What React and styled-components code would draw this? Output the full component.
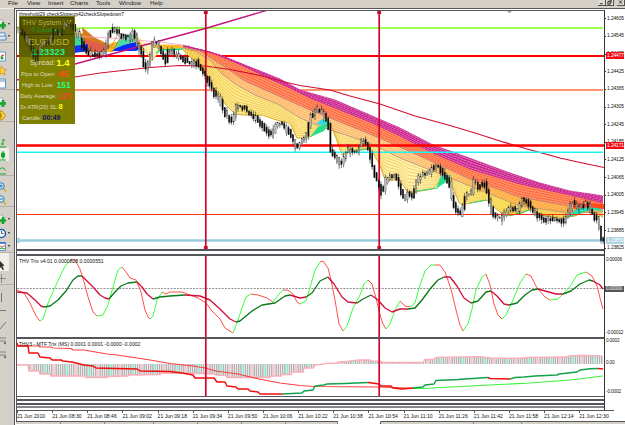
import React from "react";
import styled, { createGlobalStyle } from "styled-components";

const GlobalStyle = createGlobalStyle`
  * { box-sizing: border-box; }
  body {
    margin: 0;
    overflow: hidden;
    font-family: "Liberation Sans", Arial, sans-serif;
  }
`;

const INK = "#56565a";
const FACE = "#d4d0c8";

const menus = [
  ["File", 19],
  ["View", 21],
  ["Insert", 22],
  ["Charts", 26],
  ["Tools", 23],
  ["Window", 31],
  ["Help", 20],
];

const tools = [
  { icon: "add", h: 18, drop: true },
  { icon: "window", h: 13, drop: true, after: true },
  { icon: "compass", h: 19 },
  { icon: "star", h: 14 },
  { icon: "page", h: 14, after: true },
  { icon: "add", h: 18 },
  { icon: "coin", h: 14, after: true },
  { icon: "bars", h: 26 },
  { icon: "candle", h: 13, on: true },
  { icon: "line", h: 15, after: true },
  { icon: "zoomin", h: 17 },
  { icon: "zoomout", h: 14, after: true },
  { icon: "add", h: 18, drop: true },
  { icon: "clock", h: 14, drop: true },
  { icon: "grid", h: 14, drop: true, after: true },
  { icon: "cursor", h: 18, on: true },
  { icon: "cross", h: 14, after: true },
  { icon: "vline", h: 18 },
  { icon: "hline", h: 13 },
  { icon: "trend", h: 15 },
  { icon: "fibo", h: 15 },
  { icon: "fibo", h: 14 },
];

const prices = ["1.24605", "1.24545", "1.24485", "1.24425", "1.24365", "1.24305", "1.24245", "1.24185", "1.24125", "1.24065", "1.24005", "1.23945", "1.23885", "1.23825"];

const times = ["2010", "08:30", "08:46", "09:02", "09:18", "09:34", "09:50", "10:06", "10:22", "10:38", "10:54", "11:10", "11:26", "11:42", "11:58", "12:14", "12:30"];

const pts = (s) => s.trim().split(/\s+/).map((p) => p.split(",").map(Number));

const at = (curve, x) => {
  if (x <= curve[0][0]) return curve[0][1];
  for (let i = 1; i < curve.length; i++) {
    const [x1, y1] = curve[i];
    const [x0, y0] = curve[i - 1];
    if (x <= x1) return y0 + ((y1 - y0) * (x - x0)) / (x1 - x0);
  }
  return curve[curve.length - 1][1];
};

const price = pts(`17,32 21,30 25,35 30,42 36,62 40,48 45,42 50,43 55,28 60,35 66,24 72,24 75,28 80,38 85,49 90,54 100,55 105,52
  110,35 113,30 118,32 124,37 130,38 134,31 138,44 142,52 146,70 150,60 154,42 158,42 162,52 167,62 169,50 175,54 185,59 190,64
  196,61 202,70 207,78 210,84 215,94 220,97 222,105 226,114 233,122 237,107 243,107 250,113 255,117 262,124 268,132 272,135
  277,124 282,123 287,128 292,137 297,147 303,140 308,133 311,117 315,114 319,108 325,116 329,124 331,150 337,158 342,164
  348,150 353,152 358,152 363,140 368,146 372,160 376,177 380,185 383,195 387,178 391,177 396,176 400,185 404,200 408,192
  413,197 418,180 424,174 432,171 438,165 443,172 450,183 453,200 457,210 462,215 466,195 472,195 475,180 479,187 485,182
  489,195 493,215 500,220 506,213 512,208 518,212 523,200 528,202 534,212 540,217 546,220 552,218 558,220 564,222 570,210
  573,202 580,208 586,203 592,212 598,220 602,238 604,240`);

// ribbon boundaries, slowest average first
const slow = pts("183,46 190,47 205,51 220,55 240,63 260,71 280,79 300,90 335,100 370,115 400,128 433,145 450,151 480,162 510,173 540,183 570,191 604,196");
const magenta = pts("183,46 210,52 225,58 250,69 270,79 290,88 310,98 340,110 370,122 400,136 433,153 470,169 520,184 570,195 604,203");
const tomato = pts("183,47 200,51 225,67 245,81 270,92 290,101 310,110 335,120 370,134 400,147 433,162 470,179 520,197 570,206 604,209");
const orange = pts("183,48 195,51 210,60 222,74 235,84 255,95 280,105 300,118 325,128 370,143 400,158 433,171 455,180 480,190 520,206 570,213 604,212");
const fast = pts(`183,50 195,62 205,74 215,90 225,104 235,114 245,115 262,115 280,121 290,123 297,138 310,137 320,131 330,122 335,135 342,155
  355,150 370,148 380,165 385,180 400,180 408,193 420,191 433,189 445,175 452,186 460,205 470,203 488,200 495,208 505,216 520,214
  530,209 540,215 560,218 575,216 590,209 604,218`);

const between = (a, b, t) => {
  const out = [];
  for (let x = 183; x <= 604; x += 3) out.push([x, at(a, x) * (1 - t) + at(b, x) * t]);
  return out;
};

const toPoints = (list) => list.map(([x, y]) => `${x},${y.toFixed(1)}`).join(" ");

function Band({ a, b, fill, stroke, lines, light }) {
  const strands = [];
  for (let i = 0; i <= lines; i++) strands.push(between(a, b, i / lines));
  return (
    <g fill="none">
      <polygon fill={fill} points={toPoints([...between(a, b, 0), ...between(a, b, 1).reverse()])} />
      {strands.map((s, i) => (
        <polyline key={i} points={toPoints(s)} stroke={i % 2 ? light : stroke} strokeWidth={i % 2 ? 0.5 : 0.6} strokeDasharray={i % 2 ? "2 1.2" : "none"} />
      ))}
    </g>
  );
}

const candles = [];
let seed = 7;
const rnd = () => {
  seed = (seed * 16807) % 2147483647;
  return seed / 2147483647;
};
for (let x = 18; x < 604; x += 2.2) {
  const y0 = at(price, x - 1.3);
  const y1 = at(price, x + 1.3);
  const shift = (rnd() - 0.5) * 3;
  const pad = 0.4 + rnd() * 1.8;
  const top = Math.min(y0, y1) - pad + shift;
  const bottom = Math.max(y0, y1) + pad + shift;
  candles.push({ x, top, bottom, hi: top - rnd() * 4, lo: bottom + rnd() * 4, up: y1 < y0 ? rnd() > 0.2 : rnd() > 0.8 });
}

function Candles({ list }) {
  return list.map((c) => (
    <g key={c.x}>
      <path d={`M${c.x} ${c.hi}V${c.lo}`} stroke="#222" strokeWidth="0.6" />
      <rect x={c.x - 0.7} y={c.top} width="1.4" height={c.bottom - c.top} fill={c.up ? "#bbb" : "#050505"} stroke="#222" strokeWidth="0.25" />
    </g>
  ));
}

// r/g segments, each one starts where the last one ended
const trixFast = [
  ["r", "17,290 24,293 30,303 36,316 40,321"], ["g", "43,319 48,303 56,285 65,266 71,260"],
  ["r", "75,260 80,269 84,282 88,297 93,312 97,316"], ["g", "103,315 108,305 113,287 118,270 122,267"],
  ["r", "126,272 130,278 136,280 141,292 145,310 148,317 150,319"], ["g", "153,316 157,300 162,292"],
  ["r", "166,294 170,292 182,292 190,295 198,298 206,303 212,311 220,319 225,328 233,333"], ["g", "238,320 242,308 246,297 251,294"],
  ["r", "258,295 267,298 273,302"], ["g", "279,294 283,290"],
  ["r", "288,290 293,294 297,302 300,304"], ["g", "306,301 311,284 315,270 320,262"],
  ["r", "323,261 328,268 331,280 335,300 339,324 343,331"], ["g", "347,326 353,308 360,295 364,284 368,280"],
  ["r", "372,284 376,298 380,315 383,324 386,329"], ["g", "390,324 395,310 400,301"],
  ["r", "405,306 410,307"], ["g", "415,303 420,285 425,271 431,265 435,265"],
  ["r", "440,265 445,272 451,289 456,310 460,325 463,331"], ["g", "468,324 472,309 476,290 482,277 486,274"],
  ["r", "490,285 494,304 498,315 502,319"], ["g", "506,315 513,300 520,283 526,274"],
  ["r", "531,276 537,288 545,297 550,300"], ["g", "558,299 566,291 571,285 577,275 586,272"],
  ["r", "592,276 597,286 600,298 603,309"],
];

const trixSlow = [
  ["r", "17,292 27,293 35,300 41,306 44,307"], ["g", "50,306 58,300 66,291 73,280 78,276 82,276"],
  ["r", "88,282 94,288 100,295 105,298 109,299"], ["g", "115,292 121,286 128,283 137,282"],
  ["r", "142,287 147,294 153,299"], ["g", "160,297 170,296 185,295"],
  ["r", "200,296 210,300 220,309 230,319 236,322"], ["g", "240,321 252,311 262,305 275,303 285,296 290,295"],
  ["r", "300,298 306,297"], ["g", "312,293 320,281 328,277"],
  ["r", "334,284 342,297 348,302 357,303"], ["g", "363,299 371,295"],
  ["r", "378,300 385,308 392,312 400,309 408,309"], ["g", "415,308 422,300 430,289 438,280 444,277"],
  ["r", "450,277 457,286 464,298 471,303"], ["g", "478,301 486,292 491,291"],
  ["r", "497,296 504,304 509,305"], ["g", "517,303 525,295 532,290 538,289"],
  ["r", "545,291 556,294 563,294"], ["g", "571,291 580,284 589,280 593,281"],
  ["r", "600,285 603,289"],
];

const mtfMain = [
  ["r", `17,343 18,346 28,346 29,353 38,353 40,357 50,358 52,360 61,360 63,361 72,362 84,365 93,366 96,368 137,369 140,371 170,371.5
    182,373 193,375 195,378 214,378 217,382 225,382 227,386 236,387 238,389 248,389 250,391 258,392 260,394 282,394`],
  ["g", "302,393 304,391 313,390 315,386 324,385 327,384 345,383.5 368,382.5"],
  ["r", "379,384 381,386 391,386 393,388 402,389 413,388"],
  ["g", "423,387 425,385 434,384 436,380.5 458,379.5 480,378 488,377.5"],
  ["r", "490,378.5 510,379"],
  ["g", "515,377.5 524,377 535,376 557,375 559,374 568,373 577,372 580,370 590,368.8 598,368.5"],
  ["r", "603,369"],
];

const mtfSlow = [
  ["r", "17,346 39,346 40,347 51,347 53,348 71,348.5 73,350 84,350 107,354 117,355 137,358 150,360 170,363.5 193,366 205,368 216,371 238,374 259,379 280,383 300,385.5 314,386.5 380,387 413,388.3"],
  ["g", "424,388.5 450,387 490,385 530,383 570,380 603,376"],
];

const hist = pts(`17,365 28,365 29,371 39,371 40,374 50,374 51,376 84,376 85,377.5 107,377.5 108,376.5 128,376 129,375 160,374.5
  161,373 204,373.5 215,374 216,375 226,375.5 227,377.5 270,377.5 271,376 281,376 282,374.5 291,374.5 292,372 303,372 304,368
  313,368 315,365 324,364 326,363.3 337,363 338,362 349,361.5 350,360.8 359,360 370,360 371,361 381,361.5 382,362.5 415,362.5
  423,362.5 425,359.5 434,359.5 436,357.3 480,356.6 490,358 510,358.3 525,358 526,357.3 567,357 569,355.8 580,355.5 598,355.7 603,356.7`);

function Trace({ parts, r, g, width }) {
  let last = "";
  return parts.map(([side, p], i) => {
    const points = `${last} ${p}`;
    last = p.trim().split(/\s+/).pop();
    return <polyline key={i} points={points} fill="none" stroke={side === "r" ? r : g} strokeWidth={width} strokeLinejoin="round" />;
  });
}

function Markers({ top, bottom }) {
  return [205.8, 379.2].map((x) => <path key={x} d={`M${x} ${top}V${bottom}`} stroke="#d2042d" strokeWidth="1.7" />);
}

function PriceChart() {
  return (
    <Plot viewBox="17 11 587 238" height="238">
      <defs>
        <linearGradient id="yellow" gradientUnits="userSpaceOnUse" x1="183" x2="604" y1="0" y2="0">
          <stop offset="0" stopColor="#f7bb1a" />
          <stop offset="0.08" stopColor="#fbe27a" />
          <stop offset="0.6" stopColor="#fff0ae" />
          <stop offset="0.8" stopColor="#ffdf2e" />
          <stop offset="1" stopColor="#ffcf30" />
        </linearGradient>
        <linearGradient id="amber" gradientUnits="userSpaceOnUse" x1="183" x2="604" y1="0" y2="0">
          <stop offset="0" stopColor="#f58a10" />
          <stop offset="0.13" stopColor="#ffc17a" />
          <stop offset="0.55" stopColor="#ffd08a" />
          <stop offset="0.75" stopColor="#ffad2a" />
          <stop offset="1" stopColor="#ff9a20" />
        </linearGradient>
      </defs>

      <path d="M17 28H603" stroke="#9cff4f" strokeWidth="1.8" />
      <path d="M17 56H604" stroke="#ff0000" strokeWidth="2" />
      <path d="M17 90H603" stroke="#ff6f3c" strokeWidth="1.6" />

      <path d="M75 33L83 33 92 42 105 45 116 42 137 40 137 47 120 46 112 52 75 52Z" fill="#ffb01e" />
      <path d="M82 27L94 37 108 44 104 51 90 50 84 42Z" fill="#df7a1e" />
      <path d="M84 39L110 46 106 52 90 52Z" fill="#df6248" />
      <path d="M74 34L82 36 85 46 74 47Z" fill="#35dda0" />
      <path d="M74 46L88 44 88 51 74 53Z" fill="#1030ff" />
      <path d="M112 51L120 45 137 42 146 46 136 51Z" fill="#0a2bff" />
      <path d="M114 49L120 38 134 34 138 41 124 45Z" fill="#4fdca4" />
      <path d="M134 34L146 44 180 45 190 48 150 51 140 50Z" fill="#f8b92c" />
      <path d="M137 38L152 61 160 50" fill="#fff2b8" stroke="#e0a42c" strokeWidth="0.7" />
      <path d="M82 30Q94 41 111 47L118 34M112 52L122 35" fill="none" stroke="#b98214" strokeWidth="0.7" />
      <path d="M156 53L161 50 184 49" fill="none" stroke="#17e07c" strokeWidth="1.4" />
      <path d="M75 36L110 38 160 42 190 46" fill="none" stroke="#f59ac8" strokeWidth="0.8" />

      <Band a={orange} b={fast} fill="url(#yellow)" stroke="#ecc030" light="#fffbe2" lines={18} />
      <Band a={tomato} b={orange} fill="url(#amber)" stroke="#ffa850" light="#ffe8c8" lines={10} />
      <Band a={magenta} b={tomato} fill="#ff8058" stroke="#ff5a28" light="#ffc4a8" lines={10} />
      <Band a={slow} b={magenta} fill="#d0449e" stroke="#c4007c" light="#f2b0da" lines={8} />
      <g fill="none" strokeWidth="0.7">
        <polyline points={toPoints(between(orange, fast, 0))} stroke="#a8957c" />
        <polyline points={toPoints(between(tomato, orange, 0))} stroke="#b58a80" />
        <polyline points={toPoints(between(fast, fast, 0))} stroke="#cf9c16" />
      </g>

      {/* short-lived up slopes */}
      <path d="M310 137L318 127 331 121 324 131Z" fill="#24e08c" />
      <path d="M316 124L322 119 330 122 322 125Z" fill="#2fdde0" />
      <path d="M436 189L440 178 451 175 446 182Z" fill="#24e08c" />
      <path d="M439 179L444 174 450 176Z" fill="#2fdde0" />
      <path d="M567 218L576 209 592 205 604 211 590 210Z" fill="#24dfb4" />
      <path d="M572 204L586 203 604 204 604 209 588 207 574 209Z" fill="#ff4a1e" />
      <path d="M417 191L437 188M470 203L486 200M509 216L530 210M355 151L368 149" stroke="#35d07a" strokeWidth="1" />

      <path d="M17 80L75 64 130 49 207 28 268 10" fill="none" stroke="#c4127c" strokeWidth="1.3" />
      <path
        d="M17 90L75 77 100 73 150 67.500 180 65.500 205 66 230 69.500 260 75.500 285 82 300 85.500 330 90 350 96 380 104 415 116 430 120 450 125.500 475 133 500 141 520 147 540 152.500 560 158 580 162.500 604 167.500"
        fill="none"
        stroke="#d20f30"
        strokeWidth="1.2"
      />

      <path d="M17 145.5H604" stroke="#ff0000" strokeWidth="2.7" />
      <path d="M17 152.3H603" stroke="#1cf4f4" strokeWidth="1.6" />
      <path d="M17 214.5H604" stroke="#ff3010" strokeWidth="1.1" />
      <path d="M17 240.5H604" stroke="#b5dcea" strokeWidth="3" />
      <path d="M17 240.5H604" stroke="#98c9dc" strokeWidth="1" />
      <rect x="17" y="238" width="3" height="5" fill="#a8d4e4" />

      <Markers top={11} bottom={249} />
      {[205.8, 379.2].map((x) => (
        <g key={x} fill="#cc0a2e">
          <rect x={x - 1.9} y="10.5" width="3.8" height="3.5" />
          <rect x={x - 1.9} y="246" width="3.8" height="3.5" />
        </g>
      ))}
      <path d="M507 11H512L509.500 13.500Z" fill="#aaa" />
      <Candles list={candles.filter((c) => c.x > 75)} />
    </Plot>
  );
}

function TrixChart() {
  return (
    <Plot viewBox="17 256 587 81" height="81">
      <path d="M17 288.500H604" stroke="#777" strokeWidth="0.8" strokeDasharray="2 1.2" />
      <Trace parts={trixFast} r="#ff5148" g="#3cff3c" width="1" />
      <Trace parts={trixSlow} r="#d3103c" g="#0b7a1a" width="1.35" />
      <Markers top={256} bottom={337} />
    </Plot>
  );
}

function MtfChart() {
  const bars = [];
  for (let x = 18, i = 0; x < 603; x += 2.2, i++) bars.push({ x, y: at(hist, x), color: i % 10 === 2 ? "#7ceccb" : i % 10 === 6 ? "#ffb9bd" : "#b4b4b4" });
  return (
    <Plot viewBox="17 339 587 57" height="57">
      {bars.map((b) => (
        <rect key={b.x} x={b.x} y={Math.min(364, b.y)} width="1.5" height={Math.abs(b.y - 364)} fill={b.color} />
      ))}
      <polyline points={toPoints(hist)} fill="none" stroke="#ffacb8" strokeWidth="1.3" />
      <Trace parts={mtfSlow} r="#ff4040" g="#3cf23c" width="1.2" />
      <Trace parts={mtfMain} r="#f20d0d" g="#12a04c" width="1.5" />
      <Markers top={339} bottom={396} />
    </Plot>
  );
}

function ToolIcon({ name }) {
  const green = "#16a52c";
  return (
    <svg width="8" height="11" viewBox="0 0 8 11" fill="none">
      {name === "add" && (
        <>
          <path d="M0 1H3V8H0" fill="#f2f2f2" stroke="#889" strokeWidth="0.6" />
          <path d="M3 3V10M0 6.500H6" stroke={green} strokeWidth="2.6" />
        </>
      )}
      {name === "window" && (
        <>
          <path d="M0 2H5V6H0" fill="#fff" stroke="#4f88b8" />
          <path d="M0 5H6V9H0" fill="#dbeaf5" stroke="#4f88b8" />
        </>
      )}
      {name === "compass" && (
        <>
          <path d="M0 1H5.500V10H0" fill="#fff" stroke="#5e9ac4" />
          <path d="M0 6L3 3 4 5Z" fill="#d33" />
          <circle cx="2" cy="7" r="1.5" fill={green} />
        </>
      )}
      {name === "star" && <path d="M1.500 1L3 4 6.500 4.500 4 7 5 10 1.500 8.500 0 9V4Z" fill="#ffcd3e" stroke="#c98a16" strokeWidth="0.7" />}
      {name === "page" && <path d="M0 1H5.500V10H0M0 3H5" fill="#fff" stroke="#5e8fc0" />}
      {name === "coin" && (
        <>
          <path d="M0 1H2L5.500 5.500 2 10H0Z" fill="#ffd335" stroke="#bd8a10" />
          <path d="M1 3.500V7.500" stroke="#855d00" />
        </>
      )}
      {name === "bars" && <path d="M0 10H6M3 2V8M3 3H5M1 7H3" stroke={green} />}
      {name === "candle" && <path d="M0 10H6M3 1V9M1.500 3H4.500V7H1.500Z" fill={green} stroke={green} />}
      {name === "line" && <path d="M0 10H6M0 5Q3 2 5.500 6.500" stroke={green} />}
      {(name === "zoomin" || name === "zoomout") && (
        <>
          <path d="M3 6L6 9.500" stroke="#d9ad24" strokeWidth="1.8" />
          <circle cx="1" cy="4" r="3.2" fill="#d8f0fc" stroke="#2879b8" />
          <path d={name === "zoomin" ? "M0 4H3M1 2.500V5.500" : "M0 4H3"} stroke="#226ca9" />
        </>
      )}
      {name === "clock" && (
        <>
          <circle cx="1.500" cy="5.500" r="4" fill="#fff" stroke="#155fae" strokeWidth="1.5" />
          <path d="M1.500 3V5.500H3.500" stroke="#234" strokeWidth="0.8" />
        </>
      )}
      {name === "grid" && (
        <>
          <path d="M0 1.500H5.500V9.500H0" fill="#fff" stroke="#5d93c4" />
          <path d="M0 2H5.500" stroke="#2c6ebb" strokeWidth="1.5" />
          <path d="M0 5L2 6 5 4.500" stroke="#d55" />
          <path d="M0 7.500L2 7 5 8" stroke={green} />
        </>
      )}
      {name === "cursor" && <path d="M0 1L4.500 5.500 2.500 6 4 9.500 2.500 10 1 7 0 8Z" fill="#333" />}
      {name === "cross" && <path d="M0 5.500H6M1.500 1V10" stroke="#777" strokeWidth="0.8" />}
      {name === "vline" && <path d="M1.500 1V10" stroke="#777" />}
      {name === "hline" && <path d="M0 5.500H6" stroke="#777" />}
      {name === "trend" && <path d="M0 9L6 2" stroke="#777" />}
      {name === "fibo" && (
        <>
          <path d="M0 3H6M0 6H6" stroke="#777" strokeWidth="0.9" />
          <path d="M3.500 7.500H6.500L5 9.500Z" fill="#444" />
        </>
      )}
    </svg>
  );
}

export default function App() {
  return (
    <Terminal>
      <GlobalStyle />
      <MenuBar>
        {menus.map(([name, width]) => (
          <MenuItem key={name} $width={width}>{name}</MenuItem>
        ))}
        <WindowButtons>
          <WindowButton><path d="M2 4.500H5.500" /></WindowButton>
          <WindowButton><path d="M3 0H6V3M2 2H5V5H2Z" /></WindowButton>
          <WindowButton $gap><path d="M2 0.500L6 4.500M6 0.500L2 4.500" /></WindowButton>
        </WindowButtons>
      </MenuBar>
      <Body>
        <Toolbar>
          {tools.map((t, i) => (
            <Tool key={i} $height={t.h} $on={t.on} $after={t.after}>
              <ToolIcon name={t.icon} />
              {t.drop && <Arrow />}
            </Tool>
          ))}
        </Toolbar>
        <ChartWindow>
          <Charts>
            <Pane>
              <PriceChart />
              <PaneTitle>threshold29 checkSlopeup42checkSlopedown7</PaneTitle>
              <InfoPanel>
                <InfoHead>
                  <span>THV System V4</span>
                  <small>© CobraForm</small>
                </InfoHead>
                <Symbol>EURUSD</Symbol>
                <Quote>1.23323</Quote>
                <InfoRow $size={7.2} $indent={11}>Spread:<Value $color="#ffff14" $size={9.6}>1.4</Value></InfoRow>
                <InfoRow $indent={2}>Pips to Open:<Value $color="#ff4a1c" $size={8.4}>-95</Value></InfoRow>
                <InfoRow $indent={3}>High to Low:<Value $color="#1cff8c" $size={8.4} $gap={3}>151</Value></InfoRow>
                <InfoRow $indent={1}>Daily Average:<Value $color="#f0482c" $size={8.4}>125</Value></InfoRow>
                <InfoRow $indent={1}>3x ATR(20) SL:<Value $color="#ffff14" $size={7.5} $gap={0}>8</Value></InfoRow>
                <InfoRow $indent={3}>Candle:<Value $color="#10106a" $size={7}>00:49</Value></InfoRow>
              </InfoPanel>
              <Overlay viewBox="17 11 60 110">
                <Candles list={candles.filter((c) => c.x <= 75)} />
              </Overlay>
            </Pane>
            <Rule $size={2} />
            <Rule $size={3} $color="#fff" />
            <Rule $size={2} />
            <Pane>
              <TrixChart />
              <PaneTitle $top={2}>THV Trix v4.01 0.0000828 0.0000551</PaneTitle>
            </Pane>
            <Rule $size={2} />
            <Pane>
              <MtfChart />
              <PaneTitle $top={2}>THV3 - MTF Trix (MS) 0.0001 0.0001 -0.0000 -0.0002</PaneTitle>
            </Pane>
            <Rule $size={1} />
            <Rule $size={2} $color="#fff" />
            <Rule $size={2} />
            <Rule $size={2} $color="#fff" />
            <Rule $size={2} />
            <Rule $size={1} $color="#fff" />
            <Rule $size={2} $color="#858589" />
            <Rule $size={3} $color="#fff" />
          </Charts>
          <Scales>
            <PriceScale>
              {prices.map((p) => <Tick key={p}>{p}</Tick>)}
              <Tag $top={42} $color="#f50a14">1.24477</Tag>
              <Tag $top={132} $color="#f50a14">1.24171</Tag>
              <Tag $top={227} $color="#add3e3">1.23850</Tag>
            </PriceScale>
            <SmallScale $height={81}>
              <span>0.00006</span>
              <Zero>0.00000</Zero>
              <span>-0.00012</span>
            </SmallScale>
            <SmallScale $height={59}>
              <span>0.0002</span>
              <Level>0.00</Level>
              <span>-0.0002</span>
            </SmallScale>
          </Scales>
          <TimeAxis>
            {times.map((t) => <Time key={t}>21 Jun {t}</Time>)}
          </TimeAxis>
          <Tabs>
            <Tab $width={45} /><Tab $width={44} /><Tab $width={49} /><Tab $width={44} /><Tab $width={44} /><Tab $width={44} /><Tab $width={52} />
            <Tab $width={43} $active />
            <Tab $width={93} /><Tab $width={48} /><Tab $width={110} />
          </Tabs>
        </ChartWindow>
      </Body>
    </Terminal>
  );
}

const Terminal = styled.div`
  display: grid;
  grid-template-rows: 8px 417px;
  width: 625px;
  height: 425px;
  overflow: hidden;
  background: #fff;
`;

const MenuBar = styled.div`
  display: flex;
  padding-left: 8px;
  overflow: hidden;
  background: ${FACE};
`;

const MenuItem = styled.span`
  width: ${(p) => p.$width}px;
  margin-top: -1px;
  font-size: 6.2px;
  line-height: 7px;
  color: #222;
  white-space: nowrap;
`;

const WindowButtons = styled.div`
  display: flex;
  margin-left: auto;
  height: 6px;
`;

const WindowButton = styled.svg.attrs({ viewBox: "0 0 8 6" })`
  width: 8px;
  height: 6px;
  margin: 0 0.5px 0 ${(p) => (p.$gap ? 2 : 0)}px;
  fill: none;
  stroke: #111;
  background: #dedbd4;
  border-right: 1px solid #55534e;
  border-bottom: 1px solid #55534e;
`;

const Body = styled.div`
  display: flex;
`;

const Toolbar = styled.div`
  width: 14px;
  padding-top: 3px;
  background: ${FACE};
  border-top: 1px solid #eee;
`;

const Tool = styled.div`
  display: flex;
  align-items: flex-end;
  width: ${(p) => (p.$on ? 9 : 14)}px;
  height: ${(p) => p.$height}px;
  background: ${(p) => (p.$on ? "#f0eee9" : "transparent")};
  border-bottom: ${(p) => (p.$after && !p.$on ? "1px solid #b4b0a8" : "none")};
`;

const Arrow = styled.i`
  align-self: flex-end;
  margin-bottom: 4px;
  border: 1.5px solid transparent;
  border-top: 2px solid #222;
`;

const ChartWindow = styled.div`
  display: grid;
  grid-template: 400px 11px 3px / 587px 21px;
  width: 611px;
  border-left: 1px solid ${INK};
  border-top: 1px solid ${INK};
  padding: 1px 0 0 1px;
`;

const Charts = styled.div`
  width: 588px;
  border-left: 1px solid ${INK};
  border-top: 1px solid ${INK};
`;

const Pane = styled.div`
  position: relative;
`;

const Plot = styled.svg`
  display: block;
  width: 587px;
`;

const Overlay = styled.svg`
  position: absolute;
  top: 0;
  left: 0;
  width: 60px;
  height: 110px;
  opacity: 0.6;
`;

const Rule = styled.div`
  height: ${(p) => p.$size}px;
  background: ${(p) => p.$color || INK};
`;

const PaneTitle = styled.div`
  position: absolute;
  top: ${(p) => p.$top || -0.5}px;
  left: 2px;
  font-size: ${(p) => (p.$top ? 5.1 : 5)}px;
  line-height: 6px;
  color: #111;
  white-space: nowrap;
`;

const InfoPanel = styled.div`
  position: absolute;
  top: 5px;
  left: 2px;
  width: 56px;
  height: 108px;
  background: #808000;
  overflow: hidden;
`;

const InfoHead = styled.div`
  display: flex;
  flex-direction: column;
  align-items: center;
  height: 18px;
  margin: 1px 1px 0;
  background: #565600;
  border: 1px solid #3f3f05;
  color: #b9b345;
  white-space: nowrap;
  span {
    font-size: 7px;
    line-height: 10px;
  }
  small {
    font-size: 5px;
    line-height: 5px;
    color: #159a2a;
  }
`;

const Symbol = styled.div`
  height: 12px;
  padding-left: 9px;
  background: #5d5d00;
  font-size: 9.8px;
  line-height: 13px;
  color: #bcb434;
`;

const Quote = styled.div`
  height: 10px;
  padding-left: 12px;
  background: #606000;
  font-size: 9.4px;
  font-weight: bold;
  line-height: 10px;
  color: #22f58a;
`;

const InfoRow = styled.div`
  display: flex;
  align-items: center;
  height: 11px;
  padding-left: ${(p) => p.$indent}px;
  font-size: ${(p) => p.$size || 5.7}px;
  color: #dcdcc0;
  white-space: nowrap;
`;

const Value = styled.b`
  margin-left: ${(p) => p.$gap ?? 1}px;
  font-size: ${(p) => p.$size}px;
  color: ${(p) => p.$color};
`;

const Scales = styled.div`
  margin-left: 1px;
  border-left: 1px solid #333;
  font-size: 4.9px;
  letter-spacing: -0.1px;
  color: #111;
  overflow: hidden;
`;

const PriceScale = styled.div`
  position: relative;
  height: 246px;
`;

const Tick = styled.div`
  display: flex;
  align-items: center;
  height: 17.65px;
  line-height: 6px;
  white-space: nowrap;
  &::before {
    content: "";
    width: 1px;
    height: 1px;
    margin-right: 1px;
    background: #333;
  }
`;

const Tag = styled.div`
  position: absolute;
  top: ${(p) => p.$top}px;
  left: 0.5px;
  width: 20px;
  height: 7px;
  padding-left: 1.5px;
  line-height: 7px;
  color: #fff;
  background: ${(p) => p.$color};
`;

const SmallScale = styled.div`
  display: flex;
  flex-direction: column;
  justify-content: space-between;
  height: ${(p) => p.$height}px;
  padding: 1px 0 1px 1px;
  font-size: 4.7px;
  line-height: 6px;
  letter-spacing: -0.15px;
  white-space: nowrap;
`;

const Zero = styled.span`
  margin: 0 0 16px -1px;
  padding-left: 1px;
  color: #fff;
  background: ${INK};
`;

const Level = styled.span`
  margin-bottom: 8px;
`;

const TimeAxis = styled.div`
  display: flex;
  grid-column: 1 / 3;
  margin-right: 2px;
  border-left: 1px solid ${INK};
`;

const Time = styled.span`
  flex: 0 0 35.15px;
  padding-top: 2px;
  font-size: 5.1px;
  line-height: 7px;
  color: #111;
  white-space: nowrap;
  background: linear-gradient(${INK}, ${INK}) 0 0 / 1px 2px no-repeat;
  border-top: 1px solid ${INK};
`;

const Tabs = styled.div`
  display: flex;
  grid-column: 1 / 3;
`;

const Tab = styled.div`
  flex: 0 0 ${(p) => p.$width}px;
  background: ${(p) => (p.$active ? "#fff" : FACE)};
  border-top: 1px solid ${(p) => (p.$active ? "#fff" : INK)};
  border-right: 1px solid ${(p) => (p.$active ? INK : "#8a8883")};
`;
